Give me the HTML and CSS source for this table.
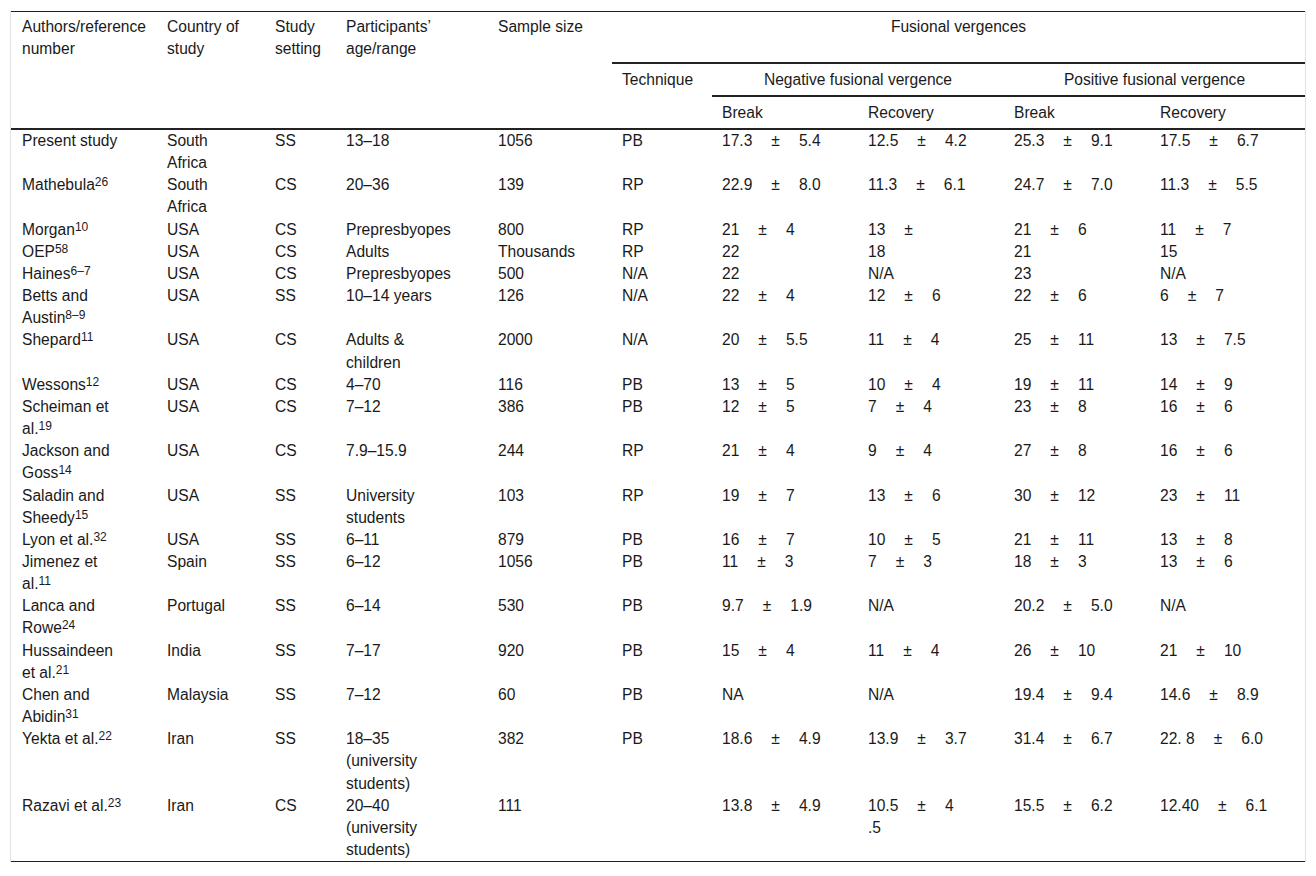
FILE: index.html
```html
<!DOCTYPE html>
<html lang="en">
<head>
<meta charset="utf-8">
<title>Fusional vergences table</title>
<link rel="stylesheet" href="styles.css">
</head>
<body>
<div class="frame">
<table class="data">
<colgroup>
<col class="w1"><col class="w2"><col class="w3"><col class="w4"><col class="w5"><col class="w6"><col class="w7"><col class="w7"><col class="w7"><col class="w10">
</colgroup>
<thead>
<tr>
<th rowspan="3" class="first span3">Authors/reference number</th>
<th rowspan="3" class="span3 c2">Country of study</th>
<th rowspan="3" class="span3">Study setting</th>
<th rowspan="3" class="span3 c4">Participants’ age/range</th>
<th rowspan="3" class="span3">Sample size</th>
<th colspan="5" class="center r1 rule">Fusional vergences</th>
</tr>
<tr>
<th rowspan="2" class="span2 r2">Technique</th>
<th colspan="2" class="center r2 rule">Negative fusional vergence</th>
<th colspan="2" class="center r2 rule">Positive fusional vergence</th>
</tr>
<tr>
<th class="r3 rule">Break</th>
<th class="r3 rule">Recovery</th>
<th class="r3 rule">Break</th>
<th class="r3 rule">Recovery</th>
</tr>
</thead>
<tbody>
<tr><td class="first">Present study</td><td class="c2">South Africa</td><td>SS</td><td class="c4">13–18</td><td>1056</td><td>PB</td><td>17.3<span class="pm">±</span>5.4</td><td>12.5<span class="pm">±</span>4.2</td><td>25.3<span class="pm">±</span>9.1</td><td>17.5<span class="pm">±</span>6.7</td></tr>
<tr><td class="first">Mathebula<sup>26</sup></td><td class="c2">South Africa</td><td>CS</td><td class="c4">20–36</td><td>139</td><td>RP</td><td>22.9<span class="pm">±</span>8.0</td><td>11.3<span class="pm">±</span>6.1</td><td>24.7<span class="pm">±</span>7.0</td><td>11.3<span class="pm">±</span>5.5</td></tr>
<tr><td class="first">Morgan<sup>10</sup></td><td class="c2">USA</td><td>CS</td><td class="c4">Prepresbyopes</td><td>800</td><td>RP</td><td>21<span class="pm">±</span>4</td><td>13<span class="pm">±</span></td><td>21<span class="pm">±</span>6</td><td>11<span class="pm">±</span>7</td></tr>
<tr><td class="first">OEP<sup>58</sup></td><td class="c2">USA</td><td>CS</td><td class="c4">Adults</td><td>Thousands</td><td>RP</td><td>22</td><td>18</td><td>21</td><td>15</td></tr>
<tr><td class="first">Haines<sup>6–7</sup></td><td class="c2">USA</td><td>CS</td><td class="c4">Prepresbyopes</td><td>500</td><td>N/A</td><td>22</td><td>N/A</td><td>23</td><td>N/A</td></tr>
<tr><td class="first">Betts and Austin<sup>8–9</sup></td><td class="c2">USA</td><td>SS</td><td class="c4">10–14 years</td><td>126</td><td>N/A</td><td>22<span class="pm">±</span>4</td><td>12<span class="pm">±</span>6</td><td>22<span class="pm">±</span>6</td><td>6<span class="pm">±</span>7</td></tr>
<tr><td class="first">Shepard<sup>11</sup></td><td class="c2">USA</td><td>CS</td><td class="c4">Adults &amp; children</td><td>2000</td><td>N/A</td><td>20<span class="pm">±</span>5.5</td><td>11<span class="pm">±</span>4</td><td>25<span class="pm">±</span>11</td><td>13<span class="pm">±</span>7.5</td></tr>
<tr><td class="first">Wessons<sup>12</sup></td><td class="c2">USA</td><td>CS</td><td class="c4">4–70</td><td>116</td><td>PB</td><td>13<span class="pm">±</span>5</td><td>10<span class="pm">±</span>4</td><td>19<span class="pm">±</span>11</td><td>14<span class="pm">±</span>9</td></tr>
<tr><td class="first">Scheiman et al.<sup>19</sup></td><td class="c2">USA</td><td>CS</td><td class="c4">7–12</td><td>386</td><td>PB</td><td>12<span class="pm">±</span>5</td><td>7<span class="pm">±</span>4</td><td>23<span class="pm">±</span>8</td><td>16<span class="pm">±</span>6</td></tr>
<tr><td class="first">Jackson and Goss<sup>14</sup></td><td class="c2">USA</td><td>CS</td><td class="c4">7.9–15.9</td><td>244</td><td>RP</td><td>21<span class="pm">±</span>4</td><td>9<span class="pm">±</span>4</td><td>27<span class="pm">±</span>8</td><td>16<span class="pm">±</span>6</td></tr>
<tr><td class="first">Saladin and Sheedy<sup>15</sup></td><td class="c2">USA</td><td>SS</td><td class="c4">University students</td><td>103</td><td>RP</td><td>19<span class="pm">±</span>7</td><td>13<span class="pm">±</span>6</td><td>30<span class="pm">±</span>12</td><td>23<span class="pm">±</span>11</td></tr>
<tr><td class="first">Lyon et al.<sup>32</sup></td><td class="c2">USA</td><td>SS</td><td class="c4">6–11</td><td>879</td><td>PB</td><td>16<span class="pm">±</span>7</td><td>10<span class="pm">±</span>5</td><td>21<span class="pm">±</span>11</td><td>13<span class="pm">±</span>8</td></tr>
<tr><td class="first">Jimenez et al.<sup>11</sup></td><td class="c2">Spain</td><td>SS</td><td class="c4">6–12</td><td>1056</td><td>PB</td><td>11<span class="pm">±</span>3</td><td>7<span class="pm">±</span>3</td><td>18<span class="pm">±</span>3</td><td>13<span class="pm">±</span>6</td></tr>
<tr><td class="first">Lanca and Rowe<sup>24</sup></td><td class="c2">Portugal</td><td>SS</td><td class="c4">6–14</td><td>530</td><td>PB</td><td>9.7<span class="pm">±</span>1.9</td><td>N/A</td><td>20.2<span class="pm">±</span>5.0</td><td>N/A</td></tr>
<tr><td class="first">Hussaindeen et al.<sup>21</sup></td><td class="c2">India</td><td>SS</td><td class="c4">7–17</td><td>920</td><td>PB</td><td>15<span class="pm">±</span>4</td><td>11<span class="pm">±</span>4</td><td>26<span class="pm">±</span>10</td><td>21<span class="pm">±</span>10</td></tr>
<tr><td class="first">Chen and Abidin<sup>31</sup></td><td class="c2">Malaysia</td><td>SS</td><td class="c4">7–12</td><td>60</td><td>PB</td><td>NA</td><td>N/A</td><td>19.4<span class="pm">±</span>9.4</td><td>14.6<span class="pm">±</span>8.9</td></tr>
<tr><td class="first">Yekta et al.<sup>22</sup></td><td class="c2">Iran</td><td>SS</td><td class="c4">18–35 (university students)</td><td>382</td><td>PB</td><td>18.6<span class="pm">±</span>4.9</td><td>13.9<span class="pm">±</span>3.7</td><td>31.4<span class="pm">±</span>6.7</td><td>22. 8<span class="pm">±</span>6.0</td></tr>
<tr class="last"><td class="first">Razavi et al.<sup>23</sup></td><td class="c2">Iran</td><td>CS</td><td class="c4">20–40 (university students)</td><td>111</td><td></td><td>13.8<span class="pm">±</span>4.9</td><td>10.5<span class="pm">±</span>4<br>.5</td><td>15.5<span class="pm">±</span>6.2</td><td>12.40<span class="pm">±</span>6.1</td></tr>
</tbody>
</table>
</div>
</body>
</html>
```
FILE: styles.css
```css
html, body {
  margin: 0;
  padding: 0;
  background: #ffffff;
}

body {
  font-family: "Liberation Sans", Arial, sans-serif;
  font-size: 15.6px;
  color: #1a1a1a;
}

.frame {
  margin: 11px 0 0 10px;
  width: 1294px;
  border-left: 1px solid #e2e2e2;
  border-right: 1px solid #e2e2e2;
}

.data {
  width: 1294px;
  table-layout: fixed;
  border-collapse: separate;
  border-spacing: 0;
  border-top: 1px solid #222;
  border-bottom: 1px solid #222;
}

.w1 { width: 146px; }
.w2 { width: 108px; }
.w3 { width: 71px; }
.w4 { width: 152px; }
.w5 { width: 124px; }
.w6 { width: 100px; }
.w7 { width: 146px; }
.w10 { width: 155px; }

.data th,
.data td {
  box-sizing: border-box;
  text-align: left;
  vertical-align: top;
  font-weight: normal;
  line-height: 22.15px;
  padding: 0 8px 0 10px;
}

.data th {
  padding-top: 4px;
  line-height: 22px;
}

.data .first {
  padding-left: 11px;
  padding-right: 30px;
}

.data .c2 {
  padding-right: 18px;
}

.data .c4 {
  padding-right: 30px;
}

.data .center {
  text-align: center;
  padding-left: 0;
  padding-right: 0;
}

.data .span3 {
  border-bottom: 2px solid #222;
}

.data .span2 {
  border-bottom: 2px solid #222;
}

.data .rule {
  border-bottom: 2px solid #222;
}

.data .r1 {
  height: 52px;
}

.data .r2 {
  height: 33px;
  padding-top: 5px;
}

.data .r3 {
  height: 33px;
  padding-top: 5px;
}

.data sup {
  font-size: 12px;
  line-height: 0;
  vertical-align: 4px;
  white-space: nowrap;
}

.pm {
  margin: 0 19px;
}
```
